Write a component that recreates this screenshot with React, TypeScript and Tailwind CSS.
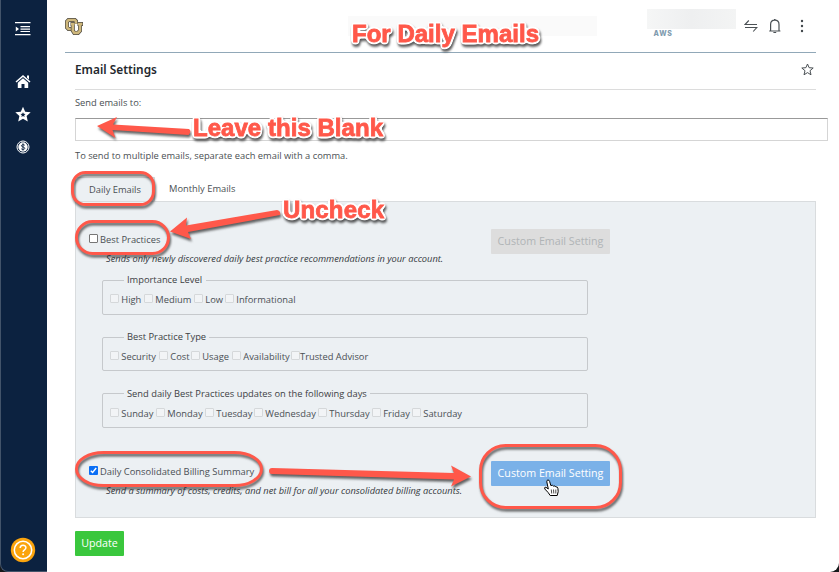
import type { ReactNode } from "react";

type Option = { label: string; cell: string; gap?: string };

const importance: Option[] = [
  { label: "High", cell: "w-[34px]" },
  { label: "Medium", cell: "w-[50px]" },
  { label: "Low", cell: "w-[31px]" },
  { label: "Informational", cell: "w-[80px]" },
];
const types: Option[] = [
  { label: "Security", cell: "w-[49px]" },
  { label: "Cost", cell: "w-[32px]" },
  { label: "Usage", cell: "w-[41px]" },
  { label: "Availability", cell: "w-[59px]" },
  { label: "Trusted Advisor", cell: "w-[80px]", gap: "gap-0" },
];
const days: Option[] = [
  { label: "Sunday", cell: "w-[46px]" },
  { label: "Monday", cell: "w-[49px]" },
  { label: "Tuesday", cell: "w-[49px]" },
  { label: "Wednesday", cell: "w-[64px]" },
  { label: "Thursday", cell: "w-[54px]" },
  { label: "Friday", cell: "w-[40px]" },
  { label: "Saturday", cell: "w-[60px]" },
];

function Box({ dim, checked }: { dim?: boolean; checked?: boolean }) {
  if (checked)
    return (
      <span className="grid h-[9px] w-[9px] shrink-0 place-items-center rounded-[1px] bg-[#0b6ff5]">
        <svg width="7" height="7" viewBox="0 0 7 7" fill="none" stroke="white" strokeWidth="1.4">
          <path d="M.8 3.7 2.6 5.5 6.2 1" />
        </svg>
      </span>
    );
  return (
    <span
      className={
        dim
          ? "block h-[9px] w-[9px] shrink-0 rounded-[1px] border border-[#d5d8da] bg-[#f2f4f6]"
          : "block h-[9px] w-[9px] shrink-0 rounded-[1px] border border-[#767676] bg-white"
      }
    />
  );
}

function Group({ title, legend, items, frame }: { title: string; legend: string; items: Option[]; frame: string }) {
  return (
    <div className={`ml-[26px] w-[486px] rounded-[2px] border border-[#c6c9cc] ${frame}`}>
      <div className={`ml-[21px] h-[13px] bg-[#ecf0f3] pl-[3px] leading-[13px] text-[#3c4043] ${legend}`}>{title}</div>
      <div className="mt-[7px] flex h-[13px] pl-[7px]">
        {items.map((o) => (
          <span key={o.label} className={`flex shrink-0 ${o.gap ?? "gap-[2.3px]"} ${o.cell}`}>
            <span className="pt-[1px]"><Box dim /></span>
            <span className="leading-[13px]">{o.label}</span>
          </span>
        ))}
      </div>
    </div>
  );
}

function Sidebar() {
  return (
    <aside className="flex w-[47px] shrink-0 flex-col items-center rounded-bl-[8px] border-b border-l border-[#43546a] bg-[#0c2240] pr-[2px] text-white">
      <svg className="mt-[22px]" width="16" height="14" viewBox="0 0 16 14" fill="white">
        <path d="M0 0h15.500v1.300H0zM5.500 4h9.500v1.200H5.500zM5.500 6.500h9.500v1.200H5.500zM5.500 9h9.500v1H5.500zM0 12h15.500v1.300H0zM.8 4.500 4 7 .8 9.500z" />
      </svg>
      <svg className="mt-[38px]" width="16" height="15" viewBox="0 0 16 15" fill="white">
        <path d="M8 1 15.500 7.500l-1 1L8 3 1.500 8.500l-1-1zM12 1.500h2v4l-2-1.800zM8 4.300l5.200 4.500V14H9.500v-4h-3v4H2.800V8.800z" />
      </svg>
      <svg className="mt-[17px]" width="16" height="17" viewBox="0.5 0 16 17">
        <path fill="white" d="m8.500.8 2.200 5 5.500.5-4.100 3.700 1.200 5.600-4.800-2.900-4.800 2.900 1.200-5.600L.8 6.300l5.500-.5z" />
        <path fill="#0c2240" d="m8.500 6.200.8 1.600 1.700.2-1.300 1.200.4 1.800-1.600-.9-1.600.9.4-1.800L6 8l1.700-.2z" />
      </svg>
      <svg className="mt-[17px]" width="14" height="14" viewBox="0 0 14 14">
        <circle cx="7" cy="7" r="6" fill="none" stroke="white" strokeWidth="1" />
        <circle cx="7" cy="7" r="4.700" fill="white" />
        <path d="M8.800 5.300C8.300 4.500 5.400 4.300 5.400 5.800S8.800 6.700 8.800 8.300 5.700 9.700 5.200 8.700M7 3.300v7.400" fill="none" stroke="#0c2240" strokeWidth=".9" />
      </svg>
      <svg className="mt-auto mb-[8px]" width="26" height="26" viewBox="0 0 26 26" fill="none">
        <circle cx="13" cy="13" r="12.200" fill="#fba40d" />
        <circle cx="13" cy="13" r="8.700" stroke="white" strokeWidth="1.500" />
        <path d="M10.200 11c0-3.500 5.700-3.500 5.700-.2 0 2-2.800 2-2.800 4.100" stroke="white" strokeWidth="1.500" />
        <circle cx="13.100" cy="17.200" r="1" fill="white" />
      </svg>
    </aside>
  );
}

function Header() {
  return (
    <header className="ml-[18px] flex h-[53px] w-[751px] border-b border-[#91a8b8]">
      <svg className="mt-[18px]" width="18" height="18" viewBox="0 0 18 18" fill="none">
        <path d="M11 5.800V3.200L9.800 2H3.500L2 3.500V9.500L3.500 11H6" stroke="#4d4a45" strokeWidth="4" />
        <path d="M11 5.800V3.200L9.800 2H3.500L2 3.500V9.500L3.500 11H6" stroke="#cfb87c" strokeWidth="2.600" />
        <path d="M5.500 6H9.500M7.800 6V12.700L9.300 14.900h3.700L15 12.700V6M12.500 6H18" stroke="#4d4a45" strokeWidth="4" />
        <path d="M6 6H9.500M7.800 6V12.700L9.300 14.900h3.700L15 12.700V6M12.800 6H17.400" stroke="#cfb87c" strokeWidth="2.600" />
      </svg>
      <div className="mt-[16px] ml-[265px] h-[20px] w-[249px] bg-[#fafafa]" />
      <div className="mt-[9px] ml-[50px] w-[89px]">
        <div className="h-[20px] bg-linear-to-r from-[#f5f6f6] via-[#eeeff0] to-[#f3f4f4]" />
        <div className="pt-px pl-[6.5px] font-['Inter','Liberation_Sans',sans-serif] text-[7px] leading-[7px] font-extrabold tracking-[.8px] text-[#7f9caf]">AWS</div>
      </div>
      <svg className="mt-[19px] ml-[8px]" width="14" height="14" viewBox="0 0 14 14" fill="none" stroke="#4a5054" strokeWidth="1.100">
        <path d="M13 5.500H1L4.800 1.500M1 8.500h11.800L9.200 12.500" />
      </svg>
      <svg className="mt-[18px] ml-[10px]" width="14" height="16" viewBox="0 0 14 16" fill="none" stroke="#4a5054" strokeWidth="1.200">
        <path d="M1.200 13h11.200M2.600 13V6.500C2.600 3.500 4.300 2.200 6.800 2.200S11 3.500 11 6.500V13M6 1.500h1.600M5.400 14.500h2.800" />
      </svg>
      <svg className="mt-[19px] ml-[18px]" width="4" height="14" viewBox="0 0 4 14" fill="#41474b">
        <circle cx="2" cy="2" r="1.200" /><circle cx="2" cy="7" r="1.200" /><circle cx="2" cy="12" r="1.200" />
      </svg>
    </header>
  );
}

function CustomButton({ tone }: { tone: string }) {
  return (
    <button className={`h-[25px] w-[119px] rounded-[1px] pb-[1px] text-[10.700px] leading-[23px] whitespace-nowrap ${tone}`}>Custom Email Setting</button>
  );
}

function Panel() {
  return (
    <section className="h-[317px] w-[741px] border border-[#d9dcde] bg-[#ecf0f3]">
      <div className="flex h-[52px] pl-[13px]">
        <div className="w-[402px] pt-[31px]">
          <div className="flex gap-[2px]"><span className="pt-[1px]"><Box /></span><span className="leading-[13px]">Best Practices</span></div>
        </div>
        <div className="pt-[27px]"><CustomButton tone="bg-[#dddddd] text-[#b0b4b6]" /></div>
      </div>
      <div className="ml-[30px] h-[13px] text-[9.290px] leading-[9px] text-[#34393d] italic">Sends only newly discovered daily best practice recommendations in your account.</div>
      <Group title="Importance Level" legend="-mt-[8px] w-[82px]" items={importance} frame="mt-[13px] h-[35px]" />
      <Group title="Best Practice Type" legend="-mt-[8px] w-[85px]" items={types} frame="mt-[22px] h-[34px]" />
      <Group title="Send daily Best Practices updates on the following days" legend="-mt-[7px] w-[246px]" items={days} frame="mt-[22px] h-[35px]" />
      <div className="flex h-[57px] pl-[13px]">
        <div className="w-[402px] pt-[37px]">
          <div className="flex gap-[2px]"><span className="pt-[1px]"><Box checked /></span><span className="text-[9.370px] leading-[13px]">Daily Consolidated Billing Summary</span></div>
        </div>
        <div className="pt-[33px]"><CustomButton tone="bg-[#7ab1e8] text-white" /></div>
      </div>
      <div className="ml-[30px] h-[13px] text-[9.290px] leading-[11px] text-[#34393d] italic">Send a summary of costs, credits, and net bill for all your consolidated billing accounts.</div>
    </section>
  );
}

function Note({ x, y, width, children }: { x: number; y: number; width: number; children: ReactNode }) {
  return (
    <text
      x={x} y={y} textLength={width}
      className="[font-family:'Liberation_Sans',Arial,sans-serif] text-[24px] font-bold"
      fill="#ff584a" stroke="#ff584a" strokeWidth=".8"
    >
      {children}
    </text>
  );
}

function Annotations() {
  return (
    <svg className="pointer-events-none absolute inset-0" width="839" height="572" viewBox="0 0 839 572">
      <defs>
        <filter id="drop" x="-10%" y="-30%" width="120%" height="170%" colorInterpolationFilters="sRGB">
          <feDropShadow dx="1" dy="2.500" stdDeviation="1" floodColor="#222" floodOpacity=".7" />
        </filter>
        <filter id="halo" x="-10%" y="-30%" width="120%" height="170%" colorInterpolationFilters="sRGB">
          <feGaussianBlur in="SourceAlpha" stdDeviation="1.800" />
          <feComponentTransfer result="edge"><feFuncA type="linear" slope="12" intercept="-.5" /></feComponentTransfer>
          <feFlood floodColor="white" />
          <feComposite in2="edge" operator="in" result="white" />
          <feMerge result="all"><feMergeNode in="white" /><feMergeNode in="SourceGraphic" /></feMerge>
          <feDropShadow in="all" dx="1" dy="2.500" stdDeviation="1" floodColor="#222" floodOpacity=".75" />
        </filter>
      </defs>
      <g fill="none" stroke="#ff584a" strokeWidth="3">
        <rect x="72.500" y="172.500" width="81" height="32" rx="13" filter="url(#drop)" />
        <rect x="76.500" y="221.500" width="92" height="32" rx="16" filter="url(#drop)" />
        <rect x="76.500" y="452.500" width="185" height="33" rx="27" ry="17" filter="url(#drop)" />
        <rect x="480.500" y="445.500" width="140" height="62" rx="25" filter="url(#drop)" />
      </g>
      <g fill="#ff584a" filter="url(#drop)">
        <path d="m97 126 20-9-4 7.500 76 4.500q3 2.500-.5 6l-76-5 3 8z" />
        <path d="m170 231.500 17-14-1 8 91-15.500q4 1 3 5l-92 17 3 7z" />
        <path d="M269 471q0-3 3-3l182 5-3-7.500 20 11-20 10 3-7-182-5.500q-3 0-3-3z" />
      </g>
      <g filter="url(#halo)">
        <Note x={352} y={42} width={187}>For Daily Emails</Note>
        <Note x={193} y={136} width={190}>Leave this Blank</Note>
        <Note x={283} y={218} width={101}>Uncheck</Note>
      </g>
      <path
        d="M548.300 489 546.800 481.800q-.2-1.600 1.100-1.800 1.300-.1 1.700 1.400l1.200 4.100q2.100-.7 2.600.6 1.900-.6 2.400.7 2-.1 2.100 1.600l.3 3.100-1 4h-7q-1.500-2.800-5.400-6.500-.8-1.900 1.100-1.800z"
        fill="white" stroke="black" strokeWidth="1"
      />
      <path d="m551.300 489.500.4 4M553.500 489.500l.3 4M555.800 489.500v4" stroke="black" strokeWidth=".7" />
    </svg>
  );
}

export default function App() {
  return (
    <div className="relative flex h-[572px] w-[839px] overflow-hidden bg-[#16181a] font-['Open_Sans','Noto_Sans',sans-serif] text-[9.330px] whitespace-nowrap text-[#4a4f53]">
      <Sidebar />
      <div className="min-w-0 flex-1 rounded-br-[9px] bg-white">
        <Header />
        <main className="ml-[28px] flex flex-col items-start">
          <div className="flex h-[37px] w-[741px] items-start justify-between border-b border-[#dcdcdc]">
            <h1 className="pt-[8px] font-['Noto_Sans','Open_Sans',sans-serif] text-[11.850px] leading-[16px] font-semibold text-[#24292e]">Email Settings</h1>
            <svg className="mt-[10px] mr-[2px]" width="13" height="13" viewBox="0 0 13 13" fill="none" stroke="#4a5054">
              <path d="m6.500 1 1.600 3.700 4.100.3L9 7.700l1 4.100-3.500-2.200L3 11.800l1-4.100L.8 5l4.100-.3z" />
            </svg>
          </div>
          <label className="mt-[6px] h-[13px] leading-[13px]">Send emails to:</label>
          <div className="mt-[9px] h-[23px] w-[753px] border border-t-[#999] border-r-[#d5d5d5] border-b-[#d5d5d5] border-l-[#d5d5d5] bg-white" />
          <p className="mt-[8px] h-[13px] leading-[13px]">To send to multiple emails, separate each email with a comma.</p>
          <div className="mt-[15px] flex h-[24px]">
            <div className="h-[25px] w-[80px] border border-b-0 border-[#d9dcde] bg-[#ecf0f3] pl-[13px] leading-[24px]">Daily Emails</div>
            <div className="pl-[14px] leading-[24px]">Monthly Emails</div>
          </div>
          <Panel />
          <button className="mt-[13px] h-[25px] w-[49px] rounded-[1px] bg-[#3ac73d] pb-[1px] text-[10.700px] leading-[23px] text-white">Update</button>
        </main>
      </div>
      <Annotations />
    </div>
  );
}
